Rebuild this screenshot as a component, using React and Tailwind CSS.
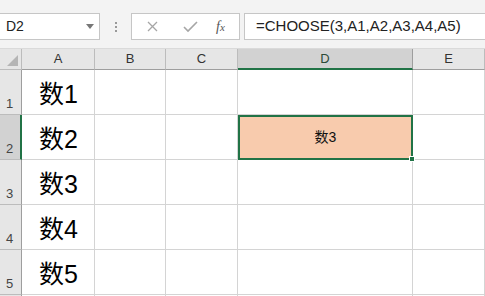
const cols = [
  { name: 'A', w: 'w-[73px]' },
  { name: 'B', w: 'w-[71px]' },
  { name: 'C', w: 'w-[72px]' },
  { name: 'D', w: 'w-[175px]' },
  { name: 'E', w: 'w-[72px]' },
]

const rows = ['数1', '数2', '数3', '数4', '数5', '']

function Toolbar() {
  return (
    <div className="flex h-[48px] items-start bg-[#f3f3f3] pt-[13px]">
      <div className="relative flex h-[27px] w-[100px] items-center border border-l-0 border-[#c6c6c6] bg-white pl-[6px] text-[14px] text-[#222]">
        D2
        <span className="absolute right-[5px] top-[10px] h-0 w-0 border-x-[4px] border-t-[5px] border-x-transparent border-t-[#777]" />
      </div>
      <div className="flex h-[27px] w-[31px] flex-col items-center justify-center gap-[2px]">
        <span className="h-[2px] w-[2px] bg-[#999]" />
        <span className="h-[2px] w-[2px] bg-[#999]" />
        <span className="h-[2px] w-[2px] bg-[#999]" />
      </div>
      <div className="flex h-[27px] w-[109px] items-center border border-[#c6c6c6] bg-white">
        <svg width="38" height="27" viewBox="0 0 38 27" className="ml-[2px]">
          <path d="M14 9l9 9M23 9l-9 9" stroke="#a6a6a6" strokeWidth="1.3" fill="none" />
        </svg>
        <svg width="38" height="27" viewBox="0 0 38 27">
          <path d="M12 14l4 4 9-9" stroke="#a6a6a6" strokeWidth="1.6" fill="none" />
        </svg>
        <span className="ml-[6px] font-['Liberation_Serif',serif] text-[14px] italic text-[#555]">
          f<span className="text-[11px]">x</span>
        </span>
      </div>
      <div className="ml-[4px] flex h-[27px] flex-1 items-center border border-r-0 border-[#c6c6c6] bg-white pl-[11px] text-[15px] text-[#222]">
        =CHOOSE(3,A1,A2,A3,A4,A5)
      </div>
    </div>
  )
}

function Sheet() {
  return (
    <div className="flex flex-col border-t border-[#dadada]">
      <div className="flex h-[21px]">
        <div className="relative w-[22px] border-r border-b border-[#bcbcbc] bg-[#e6e6e6]">
          <span className="absolute bottom-[3px] right-[3px] h-0 w-0 [border-bottom:11px_solid_#b5b5b5] [border-left:11px_solid_transparent]" />
        </div>
        {cols.map((c) => (
          <div
            key={c.name}
            className={`${c.w} flex items-center justify-center border-r text-[13px] ${
              c.name === 'D'
                ? 'border-[#9e9e9e] border-b-2 border-b-[#217346] bg-[#d2d2d2] text-[#2b4a38]'
                : 'border-[#bcbcbc] border-b border-b-[#9e9e9e] bg-[#e6e6e6] text-[#333]'
            }`}
          >
            {c.name}
          </div>
        ))}
      </div>
      {rows.map((t, i) => (
        <div key={i} className="flex h-[45px]">
          <div
            className={`flex w-[22px] items-end border-b border-[#bcbcbc] pb-[1px] pl-[6px] text-[13px] text-[#444] ${
              i === 1 ? 'border-r-2 border-r-[#217346] bg-[#d2d2d2]' : 'border-r border-r-[#9e9e9e] bg-[#e6e6e6]'
            }`}
          >
            {i < 5 ? i + 1 : ''}
          </div>
          {cols.map((c) =>
            c.name === 'D' && i === 1 ? (
              <div
                key={c.name}
                className={`${c.w} relative flex items-center justify-center border-2 border-[#217346] bg-[#f8cbad] font-['Liberation_Sans','Noto_Sans_CJK_SC',sans-serif] text-[14px] text-[#111]`}
              >
                数3
                <span className="absolute -bottom-[4px] -right-[4px] h-[6px] w-[6px] border border-white bg-[#217346]" />
              </div>
            ) : (
              <div
                key={c.name}
                className={`${c.w} flex items-end border-r border-b border-[#d4d4d4] bg-white pb-[7px] pl-[17px] font-['Liberation_Sans','Noto_Sans_CJK_SC',sans-serif] text-[25px] leading-none text-black`}
              >
                {c.name === 'A' ? t : ''}
              </div>
            )
          )}
        </div>
      ))}
    </div>
  )
}

export default function App() {
  return (
    <div className="h-[296px] w-[485px] overflow-hidden bg-white font-['Liberation_Sans',sans-serif]">
      <Toolbar />
      <Sheet />
    </div>
  )
}
